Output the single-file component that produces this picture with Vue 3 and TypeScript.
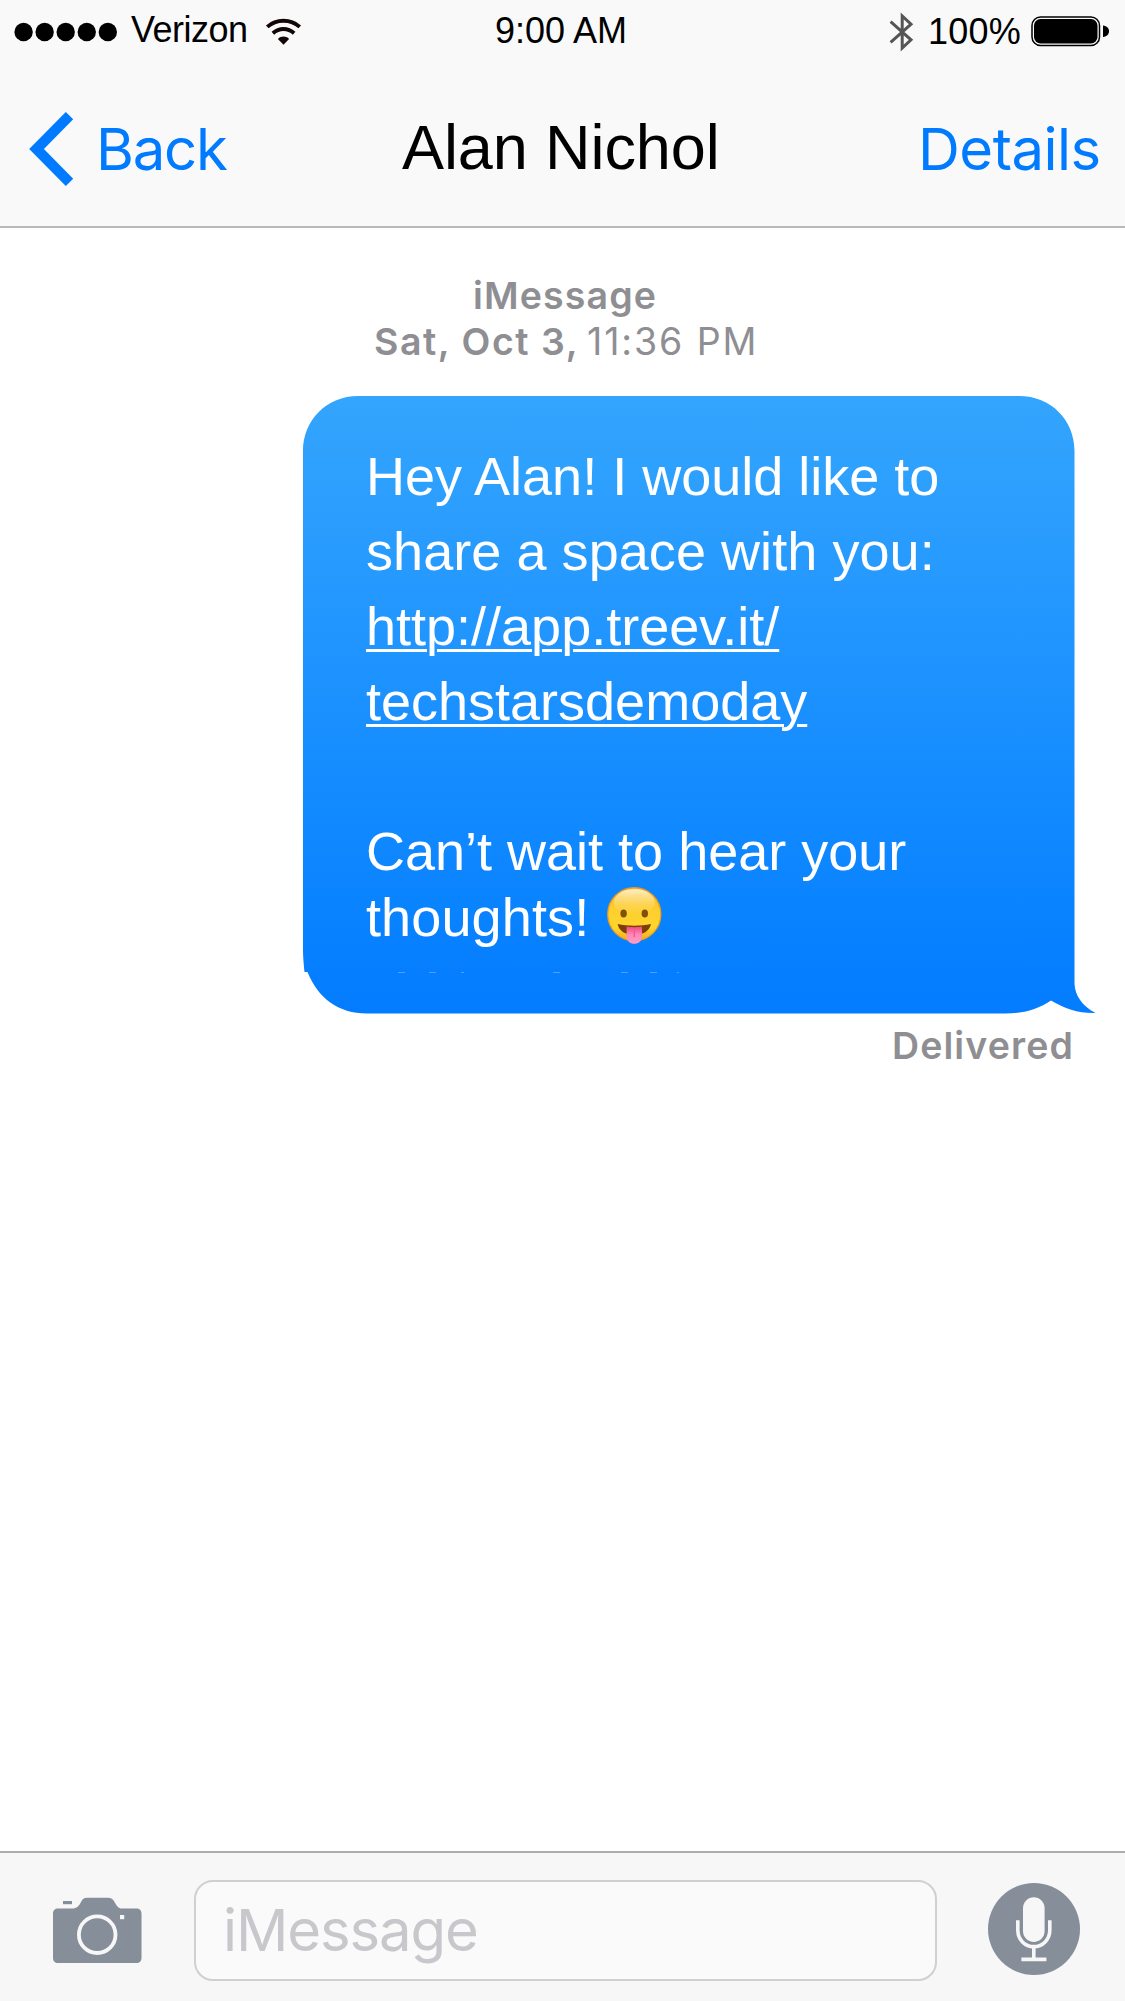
<script setup lang="ts">
interface MessageLine {
  text: string
  kind: 'text' | 'link'
  spacing: number
}

const signalDots: number[] = [0, 1, 2, 3, 4]

const lines: MessageLine[] = [
  { text: 'Hey Alan! I would like to', kind: 'text', spacing: 0 },
  { text: 'share a space with you:', kind: 'text', spacing: 0.06 },
  { text: 'http://app.treev.it/', kind: 'link', spacing: 0 },
  { text: 'techstarsdemoday', kind: 'link', spacing: 0 },
  { text: '\u00a0', kind: 'text', spacing: 0 },
  { text: 'Can’t wait to hear your', kind: 'text', spacing: 0 },
]
</script>

<template>
  <div class="phone">
    <header class="top">
      <div class="status">
        <div class="status-left">
          <svg class="dots" width="104" height="20" viewBox="0 0 104 20">
            <circle v-for="d in signalDots" :key="d" :cx="9.6 + d * 21.05" cy="10" r="9.2" />
          </svg>
          <span class="carrier">Verizon</span>
          <svg class="wifi" width="37" height="29" viewBox="0 0 38 30">
            <path d="M2.2 9.2C11.5.8 26.5.8 35.8 9.2" fill="none" stroke="#120606" stroke-width="4" />
            <path d="M8 15.8C14.5 9.9 23.5 9.9 30 15.8" fill="none" stroke="#120606" stroke-width="4" />
            <path d="M13.2 21.6C16.6 18.4 21.4 18.4 24.8 21.6L19 27.8Z" fill="#120606" />
          </svg>
        </div>
        <span class="time">9:00 AM</span>
        <div class="status-right">
          <svg class="bt" width="26" height="40" viewBox="0 0 26 40">
            <path d="M1.6 9.6L22 27.8L13.2 36V4L22 12.2L1.6 30.4" fill="none" stroke="#555" stroke-width="3" />
          </svg>
          <span class="percent">100%</span>
          <svg class="battery" width="80" height="32" viewBox="0 0 80 32">
            <rect x="1" y="1" width="67.5" height="28.5" rx="8.5" fill="none" stroke="#000" stroke-width="1.5" />
            <rect x="3" y="3" width="63.5" height="24.5" rx="6.5" />
            <path d="M72 9.5C76 10 78 12.5 78 15.3S76 20.6 72 21Z" />
          </svg>
        </div>
      </div>
      <nav class="nav">
        <a class="back">
          <svg width="46" height="76" viewBox="0 0 46 76">
            <path d="M41.5 4.6L8.5 38L41.5 71.4" fill="none" stroke="#007aff" stroke-width="10.4" />
          </svg>
          <span>Back</span>
        </a>
        <h1 class="title">Alan Nichol</h1>
        <a class="details">Details</a>
      </nav>
    </header>

    <main class="thread">
      <p class="stamp stamp-a">iMessage</p>
      <p class="stamp stamp-b"><b>Sat, Oct 3,</b><span>11:36 PM</span></p>
      <section class="bubble">
        <svg class="shape" width="794" height="620" viewBox="0 0 794 620">
          <defs>
            <linearGradient id="blue" x1="0" y1="0" x2="0" y2="1">
              <stop offset="0" stop-color="#34a5fd" />
              <stop offset="0.5" stop-color="#1b91ff" />
              <stop offset="0.9" stop-color="#0680ff" />
              <stop offset="1" stop-color="#047cff" />
            </linearGradient>
          </defs>
          <path
            fill="url(#blue)"
            d="M55 0H716C748 0 771.5 24 771.5 55V588C772 599 779 610 792.5 617C776 617.5 762 613 748 604.5C735 613 722 617.5 702 617.5H64C35 617.5 15 602 4.5 576H1.5C1 570 0 563 0 552V55C0 24 24 0 55 0Z"
          />
          <path
            d="M95 576.5h7M126 576.5h7M158 576.5h3M250 576.5h7M318 576.5h7M347 576.5h7M374 576.5h2"
            stroke="#fff"
            stroke-opacity=".28"
            stroke-width="1"
          />
        </svg>
        <div class="body">
          <p
            v-for="(line, i) in lines"
            :key="i"
            class="line"
            :style="{ letterSpacing: line.spacing + 'px' }"
          >
            <span :class="{ link: line.kind === 'link' }">{{ line.text }}</span>
          </p>
          <p class="line last">
            <span>thoughts!</span>
            <svg class="emoji" width="58" height="60" viewBox="0 0 58 60">
              <defs>
                <linearGradient id="face" x1="0" y1="0" x2="0" y2="1">
                  <stop offset="0" stop-color="#f9b62c" />
                  <stop offset=".45" stop-color="#fdd02f" />
                  <stop offset=".75" stop-color="#ffd52c" />
                  <stop offset="1" stop-color="#f5a81c" />
                </linearGradient>
                <linearGradient id="gloss" x1="0" y1="0" x2="0" y2="1">
                  <stop offset="0" stop-color="#fff3d0" stop-opacity=".95" />
                  <stop offset="1" stop-color="#ffdc5c" stop-opacity="0" />
                </linearGradient>
                <linearGradient id="tongue" x1="0" y1="0" x2="0" y2="1">
                  <stop offset="0" stop-color="#f0497d" />
                  <stop offset=".45" stop-color="#ff86b4" />
                  <stop offset="1" stop-color="#ff9cc4" />
                </linearGradient>
              </defs>
              <circle cx="28.3" cy="28.3" r="26.6" fill="url(#face)" stroke="#ee9a1b" stroke-width="1.2" />
              <ellipse cx="28.3" cy="16.5" rx="20.5" ry="13.5" fill="url(#gloss)" />
              <ellipse cx="17.6" cy="27.6" rx="3.2" ry="4" fill="#82500a" />
              <ellipse cx="38.8" cy="27.6" rx="3.2" ry="4" fill="#82500a" />
              <path d="M11.6 38C22 40.3 34.6 40.3 45 38C43.5 45 37 49 28.3 49S13 45 11.6 38Z" fill="#7c3f08" />
              <path d="M20.6 40.6C25 41.4 31.6 41.4 36 40.6V50.5C36 55 32.5 57.8 28.3 57.8S20.6 55 20.6 50.5Z" fill="url(#tongue)" />
              <path d="M28.3 43V51" stroke="#ea5c92" stroke-width="1.4" />
            </svg>
          </p>
        </div>
      </section>
      <p class="delivered">Delivered</p>
    </main>

    <footer class="composer">
      <svg class="camera" width="90" height="68" viewBox="0 0 90 68">
        <path
          fill="#868e99"
          d="M5 11.5H19C24 11.5 26 9 28 5C29.5 2 31 .7 34 .7H55C58 .7 60 2 61.5 5C64 9 65 11.5 69 11.5H83.5C86.5 11.5 88.5 13.5 88.5 16.5V61C88.5 64 86.5 66 83.5 66H5C2 66 0 64 0 61V16.5C0 13.5 2 11.5 5 11.5Z"
        />
        <rect x="10" y="4" width="9" height="3.2" fill="#868e99" />
        <circle cx="44.2" cy="37.7" r="18.3" fill="none" stroke="#f7f7f7" stroke-width="3.8" />
        <rect x="67" y="18" width="4.2" height="4.2" fill="#f7f7f7" />
      </svg>
      <div class="field"><span>iMessage</span></div>
      <svg class="mic" width="92" height="92" viewBox="0 0 92 92">
        <circle cx="46" cy="46" r="46" fill="#868e99" />
        <rect x="35" y="14.3" width="21.6" height="44.6" rx="10.8" fill="#f7f7f7" />
        <path d="M29.8 37.3V47.3C29.8 56.5 36.8 63.6 45.8 63.6S61.8 56.5 61.8 47.3V37.3" fill="none" stroke="#f7f7f7" stroke-width="3.6" />
        <path d="M45.8 63.5V76M33.4 76.4H58.4" fill="none" stroke="#f7f7f7" stroke-width="3.6" />
      </svg>
    </footer>
  </div>
</template>

<style>
body {
  margin: 0;
  background: #fff;
}
</style>

<style scoped>
.phone {
  width: 1125px;
  height: 2001px;
  display: flex;
  flex-direction: column;
  background: #fff;
  overflow: hidden;
  font-family: 'Liberation Sans', Arial, sans-serif;
}
p,
h1 {
  margin: 0;
  font-weight: 400;
  white-space: nowrap;
}
svg {
  display: block;
  flex: none;
}
.top {
  box-sizing: border-box;
  height: 228px;
  background: #f9f9f9;
  border-bottom: 2px solid #b9b9b9;
  flex: none;
}
.status {
  height: 60px;
  display: grid;
  grid-template-columns: 495px 394px 236px;
  font-size: 36px;
  line-height: 60px;
  color: #000;
  white-space: nowrap;
}
.status-left,
.status-right {
  display: flex;
  align-items: center;
}
.status-left {
  padding-left: 14px;
}
.carrier {
  margin-left: 13px;
  width: 134px;
  letter-spacing: -0.5px;
  padding-bottom: 4px;
}
.time {
  padding-top: 1px;
}
.bt {
  margin-right: 13px;
}
.percent {
  width: 103px;
  letter-spacing: 0.2px;
}
.nav {
  margin-top: 11px;
  height: 155px;
  display: grid;
  grid-template-columns: 402px 516px 207px;
  align-items: center;
}
.back,
.details {
  font-family: Inter, sans-serif;
  font-size: 58px;
  color: #007aff;
  line-height: 76px;
}
.back {
  display: flex;
  padding-left: 28px;
}
.back span {
  margin-left: 22px;
  letter-spacing: -1.2px;
}
.details {
  letter-spacing: -0.5px;
}
.title {
  font-size: 63px;
  line-height: 76px;
  letter-spacing: -0.1px;
  padding-bottom: 4px;
}
.thread {
  height: 1623px;
  flex: none;
  display: flex;
  flex-direction: column;
}
.stamp,
.delivered {
  font-family: Inter, sans-serif;
  font-size: 37.5px;
  font-weight: 600;
  line-height: 46px;
  color: #8e8e93;
}
.stamp-a {
  margin-top: 45px;
  padding-left: 473px;
  letter-spacing: 1.15px;
}
.stamp-b {
  display: flex;
  padding-left: 374px;
}
.stamp-b b {
  width: 213px;
  font-weight: 600;
  letter-spacing: 1.55px;
}
.stamp-b span {
  font-weight: 400;
  letter-spacing: 1.9px;
}
.bubble {
  position: relative;
  margin: 31px 0 0 303px;
  width: 772px;
  height: 618px;
}
.shape {
  position: absolute;
  left: 0;
  top: 0;
}
.body {
  position: relative;
  padding: 43px 0 0 63px;
  color: #fff;
}
.line {
  font-size: 54px;
  line-height: 75px;
  height: 75px;
}
.link {
  text-decoration: underline;
  text-decoration-thickness: 3px;
  text-underline-offset: 4px;
}
.last {
  display: flex;
  line-height: 57px;
  height: 57px;
  letter-spacing: 0.12px;
}
.emoji {
  margin: -3px 0 0 17px;
}
.delivered {
  margin-top: 9px;
  padding-left: 892px;
  letter-spacing: 1.1px;
}
.composer {
  box-sizing: border-box;
  height: 150px;
  display: flex;
  background: #f7f7f7;
  border-top: 2px solid #adadb0;
}
.camera {
  margin: 44px 0 0 53px;
}
.field {
  box-sizing: border-box;
  margin: 27px 0 0 51px;
  width: 743px;
  height: 101px;
  border: 2px solid #cfcfd4;
  border-radius: 19px;
  background: #fafafa;
  padding-left: 27px;
  font-family: Inter, sans-serif;
  font-size: 58px;
  letter-spacing: -1.1px;
  line-height: 97px;
  color: #c8c7cc;
}
.mic {
  margin: 30px 0 0 51px;
}
</style>
